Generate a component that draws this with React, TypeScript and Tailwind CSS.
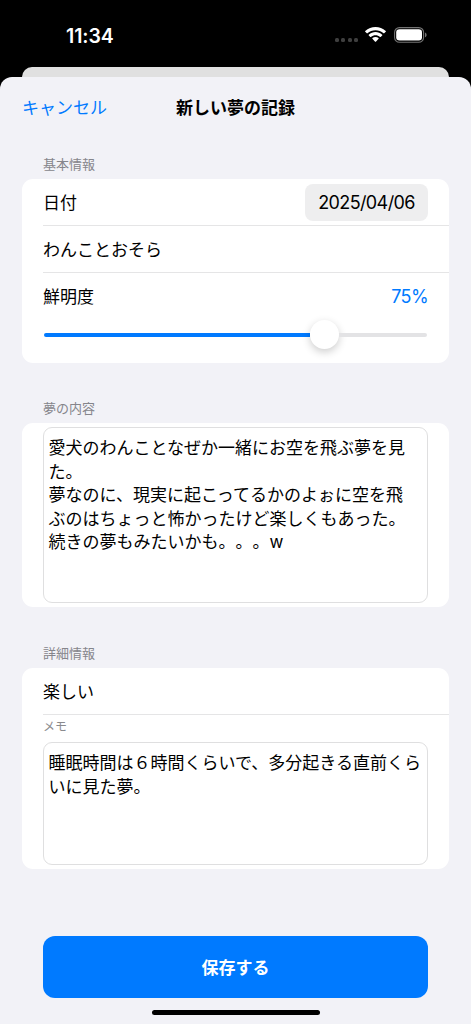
import React from 'react';

const dreamLines = [
  '愛犬のわんことなぜか一緒にお空を飛ぶ夢を見',
  'た。',
  '夢なのに、現実に起こってるかのよぉに空を飛',
  'ぶのはちょっと怖かったけど楽しくもあった。',
  '続きの夢もみたいかも。。。w',
];

const memoLines = ['睡眠時間は６時間くらいで、多分起きる直前くら', 'いに見た夢。'];

const StatusBar = () => (
  <div className="h-[67px] flex items-start justify-between pl-[66px] pr-[43px] pt-[23px] text-white">
    <span className="text-[19.5px] leading-[26px] font-semibold tracking-[-0.1px]">11:34</span>
    <div className="flex items-start">
      <div className="flex gap-[2.4px] mt-[15px] mr-[7px]">
        <span className="w-1 h-1 rounded-[1.5px] bg-[#3f3f3f]" />
        <span className="w-1 h-1 rounded-[1.5px] bg-[#3f3f3f]" />
        <span className="w-1 h-1 rounded-[1.5px] bg-[#3f3f3f]" />
        <span className="w-1 h-1 rounded-[1.5px] bg-[#3f3f3f]" />
      </div>
      <svg className="w-[21px] h-[15px] mt-[4px] mr-[8px]" viewBox="0 0 17 12.3" fill="currentColor">
        <path d="M8.5 2.6c2.5 0 4.8.9 6.6 2.6.1.1.3.1.5 0l1.3-1.3c.2-.2.2-.4 0-.6-4.7-4.4-12.1-4.4-16.8 0-.2.2-.2.4 0 .6l1.3 1.3c.2.1.4.1.5 0 1.8-1.7 4.1-2.6 6.6-2.6z" />
        <path d="M8.5 6.8c1.4 0 2.7.5 3.7 1.4.1.1.4.1.5 0l1.3-1.3c.2-.2.2-.4 0-.6-3.1-2.9-7.9-2.9-11 0-.2.2-.2.4 0 .6l1.3 1.3c.1.1.4.1.5 0 1-.9 2.3-1.4 3.7-1.4z" />
        <path d="M11 9.7c.2-.2.2-.4 0-.6-1.4-1.2-3.6-1.2-5 0-.2.2-.2.4 0 .6l2.2 2.3c.2.2.4.2.6 0z" />
      </svg>
      <svg className="w-[33px] h-[16px] mt-[4px] mr-px" viewBox="0 0 33 16" fill="none">
        <rect x="0.6" y="0.6" width="29" height="14.6" rx="4.8" stroke="#737373" strokeWidth="1.1" />
        <rect x="2.2" y="2.2" width="25.8" height="11.4" rx="3.3" fill="white" />
        <path d="M31 5.6v4.6c1-.4 1.6-1.3 1.6-2.3S32 6 31 5.6z" fill="#737373" />
      </svg>
    </div>
  </div>
);

const SectionLabel = ({ children }: { children: React.ReactNode }) => (
  <h2 className="pl-[21px] text-[13px] leading-[20px] text-[#85858b]">{children}</h2>
);

const TextBox = ({ lines, className }: { lines: string[]; className: string }) => (
  <div
    className={`rounded-[9px] border border-[#dfdfe0] pl-[4.5px] pt-[9px] text-[17px] leading-[23.6px] whitespace-nowrap ${className}`}
  >
    {lines.map((line) => (
      <p key={line}>{line}</p>
    ))}
  </div>
);

const App = () => {
  return (
    <div
      lang="ja"
      className="w-[471px] h-[1024px] overflow-hidden flex flex-col bg-black text-black font-['Inter','Noto_Sans_CJK_JP',sans-serif] [text-spacing-trim:space-all]"
    >
      <StatusBar />
      <div className="bg-black">
        <div className="h-[10px] mx-[22px] rounded-t-[10px] bg-[#e0e0e0]" />
      </div>

      <div className="flex-1 flex flex-col rounded-t-[12px] bg-[#f2f2f7] px-[22px]">
        <header className="grid grid-cols-3 items-center h-[60px] pt-[4px] text-[17px] whitespace-nowrap">
          <button className="text-left text-[#007aff]">キャンセル</button>
          <h1 className="text-center font-bold">新しい夢の記録</h1>
        </header>

        <section className="pt-[17px]">
          <SectionLabel>基本情報</SectionLabel>
          <div className="mt-[5px] h-[184px] rounded-[11px] bg-white pl-[21px] text-[17px]">
            <div className="h-[47px] flex items-center justify-between pr-[21px] border-b border-[#e5e5e6]">
              <span className="pt-[3px]">日付</span>
              <span className="w-[123px] h-[37px] rounded-[8px] bg-[#eeeeef] flex items-center justify-center text-[18px] tracking-[-0.6px]">
                2025/04/06
              </span>
            </div>
            <div className="h-[47px] pt-[4px] flex items-center border-b border-[#e5e5e6]">わんことおそら</div>
            <div className="h-[46px] flex items-center justify-between pr-[21px]">
              <span className="pt-[3px]">鮮明度</span>
              <span className="text-[18px] tracking-[-0.6px] text-[#007aff]">75%</span>
            </div>
            <div className="h-[30px] mr-[22px] flex items-center">
              <div className="w-[266px] h-[4px] mt-[2px] ml-px rounded-l-full bg-[#007aff]" />
              <div className="w-[29px] h-[29px] shrink-0 rounded-full bg-white shadow-[0_3px_8px_rgba(0,0,0,0.2)]" />
              <div className="flex-1 h-[4px] mt-[2px] rounded-r-full bg-[#e3e3e5]" />
            </div>
          </div>
        </section>

        <section className="pt-[35px]">
          <SectionLabel>夢の内容</SectionLabel>
          <div className="mt-[5px] h-[184px] rounded-[11px] bg-white px-[21px] pt-[4px]">
            <TextBox lines={dreamLines} className="h-[176px]" />
          </div>
        </section>

        <section className="pt-[36px]">
          <SectionLabel>詳細情報</SectionLabel>
          <div className="mt-[5px] h-[201px] rounded-[11px] bg-white pl-[21px]">
            <div className="h-[47px] pt-[3px] flex items-center border-b border-[#e5e5e6] text-[17px]">楽しい</div>
            <p className="h-[27px] pt-[3px] text-[12px] leading-[18px] text-[#8a8a8e]">メモ</p>
            <div className="pr-[21px]">
              <TextBox lines={memoLines} className="h-[123px]" />
            </div>
          </div>
        </section>

        <button className="mt-[67px] mx-[21px] h-[62px] pt-[3px] shrink-0 rounded-[12px] bg-[#007aff] text-white text-[17px] font-bold">
          保存する
        </button>
        <div className="mt-[12px] mx-auto w-[168px] h-[5px] rounded-full bg-black" />
      </div>
    </div>
  );
};

export default App;
